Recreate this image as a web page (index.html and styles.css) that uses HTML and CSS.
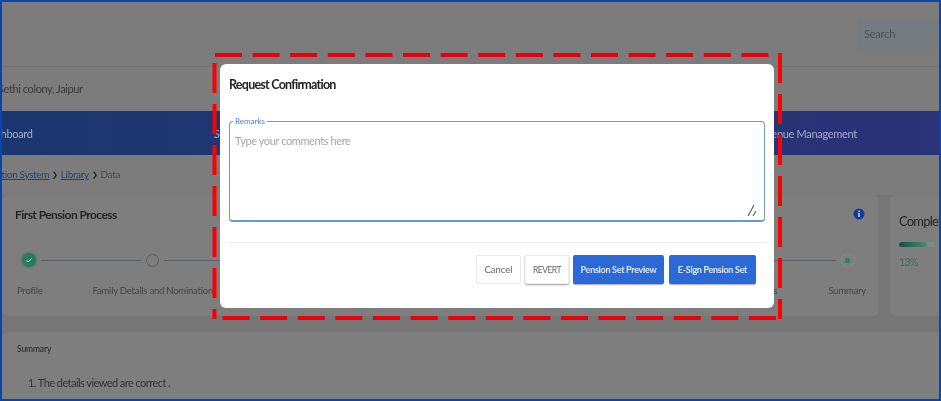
FILE: index.html
```html
<!DOCTYPE html>
<html lang="en">
<head>
<meta charset="utf-8">
<title>Request Confirmation</title>
<link rel="stylesheet" href="styles.css">
</head>
<body>
<div class="frame">
  <div class="page">
    <header class="top">
      <div class="search">Search</div>
    </header>
    <div class="address">Sethi colony, Jaipur</div>
    <nav class="nav">
      <span class="nav-first">Dashboard</span>
      <span class="nav-mid">Services</span>
      <span class="nav-last">Revenue Management</span>
    </nav>
    <div class="crumbs">
      <a class="crumb-first">Information System</a>
      <span class="sep">❯</span>
      <a>Library</a>
      <span class="sep">❯</span>
      <span>Data</span>
    </div>
    <div class="cards">
      <section class="card process">
        <div class="card-head">
          <h2>First Pension Process</h2>
          <svg class="info" viewBox="0 0 12 12" width="12" height="12"><circle cx="6" cy="6" r="5.5" fill="#163a8f"/><rect x="5.2" y="5" width="1.6" height="4" fill="#b9c6e6"/><rect x="5.2" y="2.6" width="1.6" height="1.5" fill="#b9c6e6"/></svg>
        </div>
        <div class="track">
          <span class="dot done"><svg viewBox="0 0 12 12" width="12" height="12"><path d="M3.4 6.2l1.8 1.8 3.4-3.6" fill="none" stroke="#d4e0da" stroke-width="1"/></svg></span>
          <span class="line"></span>
          <span class="dot"></span>
          <span class="line"></span>
          <span class="dot active"></span>
        </div>
        <div class="labels">
          <span class="lab-profile">Profile</span>
          <span class="lab-family">Family Details and Nomination</span>
          <span class="lab-docs">Documents</span>
          <span class="lab-summary">Summary</span>
        </div>
      </section>
      <section class="card complete">
        <h2>Completion</h2>
        <div class="bar"><div class="bar-fill"></div></div>
        <div class="pct">13%</div>
      </section>
    </div>
    <section class="card summary">
      <div class="sum-title">Summary</div>
      <p>1. The details viewed are correct .</p>
    </section>
  </div>

  <div class="modal">
    <h1>Request Confirmation</h1>
    <div class="field">
      <span class="legend">Remarks</span>
      <div class="placeholder">Type your comments here</div>
      <svg class="grip" viewBox="0 0 10 13" width="10" height="13"><path d="M1 12L7 1M6 12l3-5" stroke="#555" stroke-width="1.1" fill="none"/></svg>
    </div>
    <hr class="rule">
    <div class="actions">
      <button class="btn plain">Cancel</button>
      <button class="btn raised">REVERT</button>
      <button class="btn primary wide">Pension Set Preview</button>
      <button class="btn primary">E-Sign Pension Set</button>
    </div>
  </div>

  <svg class="dash" width="941" height="401" viewBox="0 0 941 401">
    <path class="dh" d="M215 55H780"/>
    <path class="dh" d="M776 318H213"/>
    <path class="dv" d="M214.500 63V319"/>
    <path class="dv" d="M780 53V319"/>
  </svg>
</div>
</body>
</html>
```
FILE: styles.css
```css
* { box-sizing: border-box; }
html, body { margin: 0; padding: 0; background: #7c7c7c; }
body { font-family: Lato, "Noto Sans", sans-serif; }

.frame {
  position: relative;
  width: 941px;
  height: 401px;
  overflow: hidden;
  border: 2px solid #0a45ae;
  background: #767676;
}

.page { display: flex; flex-direction: column; height: 100%; filter: blur(.4px); }

.top {
  height: 65px;
  flex: none;
  display: flex;
  justify-content: flex-end;
  align-items: flex-start;
  padding-top: 17px;
  background: #7c7c7c;
  border-bottom: 1px solid #737373;
}
.search {
  width: 81px;
  height: 31px;
  padding: 8px 6px;
  font-size: 11px;
  letter-spacing: -.2px;
  color: #4e5256;
  background: #767b80;
  border-radius: 3px 0 0 3px;
}

.address {
  height: 44px;
  flex: none;
  padding: 15px 0 0 0;
  margin-left: -4px;
  font-size: 11px;
  letter-spacing: -.4px;
  color: #3a3a3a;
  background: #7c7c7c;
}

.nav {
  height: 44px;
  flex: none;
  display: flex;
  align-items: center;
  padding-right: 82px;
  font-size: 11px;
  letter-spacing: -.3px;
  color: #a4abc4;
  background: linear-gradient(90deg, #1b376f, #2b3277);
}
.nav-first { margin-left: -19px; }
.nav-mid { margin-left: 181px; }
.nav-last { margin-left: auto; }

.crumbs {
  height: 40px;
  flex: none;
  display: flex;
  align-items: center;
  gap: 3px;
  padding-bottom: 2px;
  font-size: 10px;
  letter-spacing: -.35px;
  color: #484848;
  background: #7c7c7c;
}
.crumbs a { color: #27417e; text-decoration: underline; }
.crumb-first { margin-left: -32px; }
.sep { font-size: 7px; color: #222; }

.cards { display: flex; gap: 11px; height: 121px; flex: none; }
.card { background: #7e7e7e; border-radius: 6px; }
.card h2 { margin: 0; font-size: 12px; letter-spacing: -.55px; font-weight: 700; color: #262626; }

.process { width: 877px; flex: none; padding: 11px 13px 0 13px; }
.card-head { display: flex; justify-content: space-between; align-items: center; height: 16px; padding-right: 1px; }
.info { flex: none; }

.track { display: flex; align-items: center; margin-top: 31px; padding-left: 7px; padding-right: 12px; }
.dot {
  flex: none;
  width: 13px;
  height: 13px;
  border-radius: 50%;
  border: 1px solid #5c5c5c;
  display: flex;
  align-items: center;
  justify-content: center;
}
.dot.done { border: 0; background: #2a7a62; box-shadow: 0 0 3px #2a7a62; width: 14px; height: 14px; }
.dot.active { background: radial-gradient(circle, #27856a 0 2.500px, #7e7e7e 3px); border: 1px solid #858b88; box-shadow: 0 0 3px #8a8a8a; }
.line { height: 1px; background: #5a6070; margin: 0 5px; width: 100px; }
.line:nth-child(4) { flex: 1; }

.labels { display: flex; margin-top: 18px; font-size: 9.500px; letter-spacing: -.22px; color: #454545; }
.lab-profile { margin-left: 2px; }
.lab-family { margin-left: 50px; }
.lab-docs { margin-left: auto; }
.lab-summary { margin-left: 51px; }

.complete { flex: 1; padding: 18px 0 0 9px; white-space: nowrap; }
.complete h2 { font-size: 13px; font-weight: 400; letter-spacing: -.8px; }
.bar { width: 36px; height: 5px; margin-top: 13px; border-radius: 3px; background: #7c8a86; }
.bar-fill { width: 28px; height: 5px; border-radius: 3px; background: linear-gradient(90deg, #14503f, #4d8a77); }
.pct { margin-top: 9px; font-size: 10.500px; letter-spacing: -.6px; color: #3f6b5d; }

.summary { margin-top: 16px; height: 80px; padding: 12px 15px; border-radius: 6px 0 0 0; }
.sum-title { font-size: 8.500px; letter-spacing: -.1px; color: #222; }
.summary p { margin: 22px 0 0 11px; font-size: 11px; letter-spacing: -.55px; color: #333; }

.modal {
  position: absolute;
  left: 218px;
  top: 62px;
  width: 554px;
  height: 244px;
  padding: 12px 9px 0 9px;
  background: #fff;
  border-radius: 6px;
  display: flex;
  flex-direction: column;
  filter: blur(.3px);
}
.modal h1 { margin: 0; height: 18px; font-size: 12.500px; line-height: 18px; font-weight: 700; letter-spacing: -.75px; color: #232323; }

.field {
  position: relative;
  height: 101px;
  margin-top: 27px;
  padding: 11px 5px;
  border: 1px solid #6c98d4;
  border-bottom-width: 2px;
  border-radius: 4px;
}
.legend {
  position: absolute;
  left: 3px;
  top: -5px;
  padding: 0 2px;
  font-size: 8px;
  line-height: 9px;
  color: #4a7fd0;
  background: #fff;
}
.placeholder { font-size: 11px; letter-spacing: -.4px; line-height: 16px; color: #a6a6a6; }
.grip { position: absolute; right: 7px; bottom: 3px; }

.rule { width: 100%; height: 1px; margin: 20px 0 0 0; border: 0; background: #e7ebee; flex: none; }

.actions { display: flex; justify-content: flex-end; gap: 4px; margin-top: 12px; padding-right: 9px; }
.btn {
  height: 29px;
  padding: 0;
  font-family: inherit;
  font-size: 9.500px;
  white-space: nowrap;
  border-radius: 2px;
  border: 1px solid transparent;
}
.plain { width: 45px; color: #666; background: #fff; border-color: #e8e8e8; }
.raised { width: 44px; font-size: 8.500px; letter-spacing: -.5px; color: #666; background: #fff; border-color: #eee; box-shadow: 0 1px 2px #999; }
.primary { width: 87px; font-size: 9px; letter-spacing: -.3px; color: #dfe8f8; font-weight: 700; background: #2b6ad6; box-shadow: 0 1px 1px #aac; }
.wide { width: 91px; margin-right: 1px; }

.dash { position: absolute; left: -2px; top: -2px; pointer-events: none; fill: none; }
.dh { stroke: #e8000b; stroke-width: 4; stroke-dasharray: 27 10.600; }
.dv { stroke: #f00; stroke-width: 4; stroke-dasharray: 30 11; }
```
